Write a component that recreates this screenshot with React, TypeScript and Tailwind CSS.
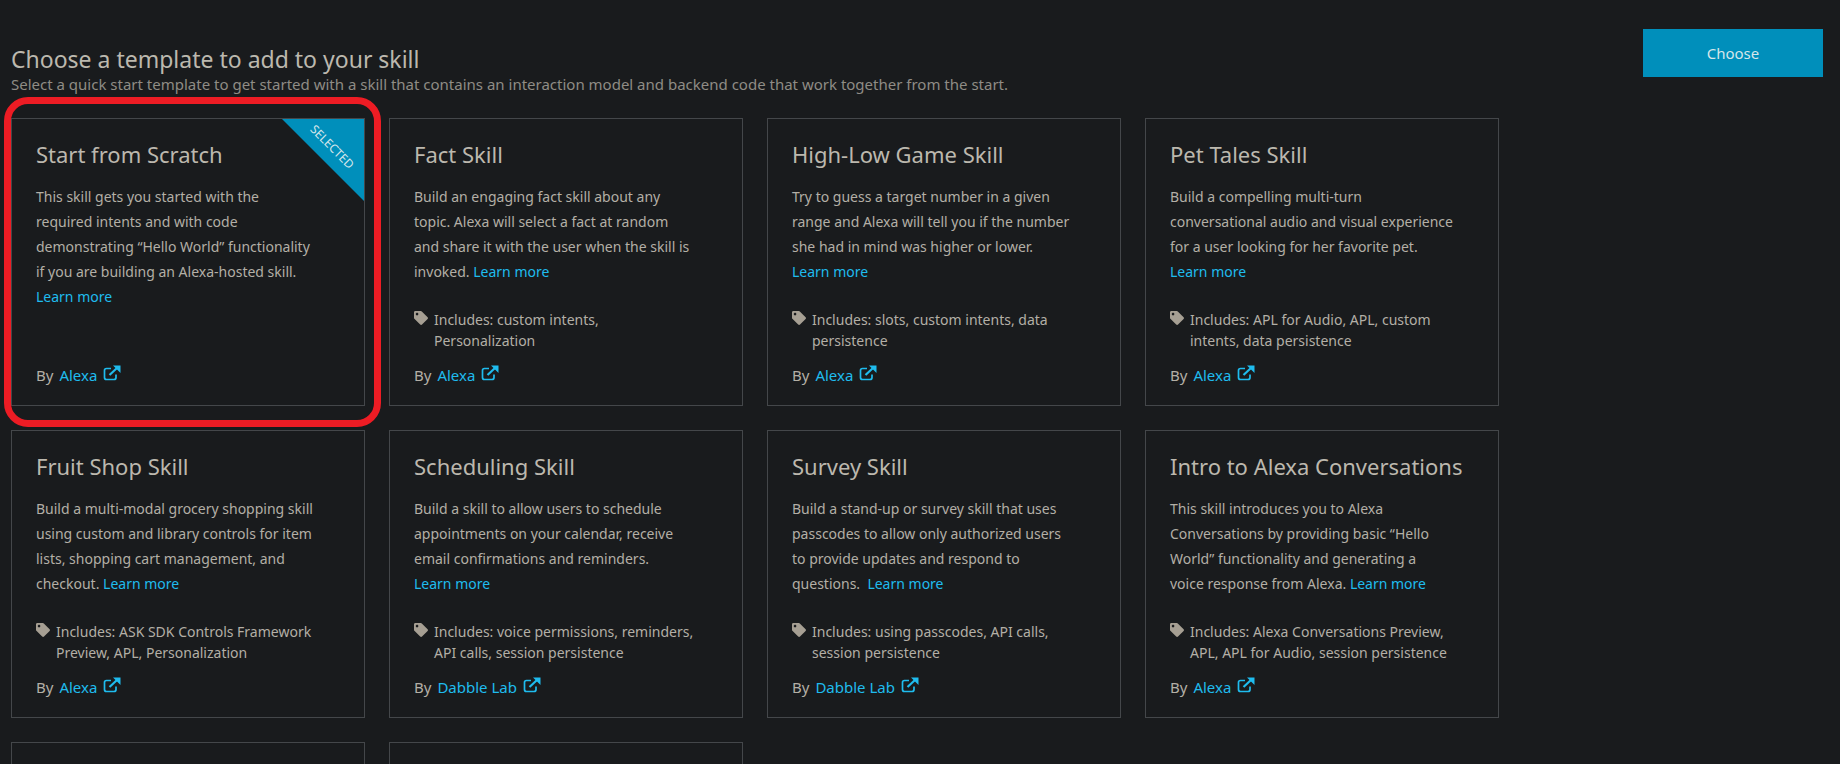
import React from "react";
import { FaTag } from "react-icons/fa";

type Card = { title: string; desc: React.ReactNode; inc?: string[]; by: string; selected?: boolean };

const More = () => <a className="text-[#1fbcee]">Learn more</a>;

const cards: Card[] = [
  { title: "Start from Scratch", selected: true, by: "Alexa", desc: <>This skill gets you started with the<br />required intents and with code<br />demonstrating “Hello World” functionality<br />if you are building an Alexa-hosted skill.<br /><More /></> },
  { title: "Fact Skill", by: "Alexa", inc: ["custom intents,", "Personalization"], desc: <>Build an engaging fact skill about any<br />topic. Alexa will select a fact at random<br />and share it with the user when the skill is<br />invoked. <More /></> },
  { title: "High-Low Game Skill", by: "Alexa", inc: ["slots, custom intents, data", "persistence"], desc: <>Try to guess a target number in a given<br />range and Alexa will tell you if the number<br />she had in mind was higher or lower.<br /><More /></> },
  { title: "Pet Tales Skill", by: "Alexa", inc: ["APL for Audio, APL, custom", "intents, data persistence"], desc: <>Build a compelling multi-turn<br />conversational audio and visual experience<br />for a user looking for her favorite pet.<br /><More /></> },
  { title: "Fruit Shop Skill", by: "Alexa", inc: ["ASK SDK Controls Framework", "Preview, APL, Personalization"], desc: <>Build a multi-modal grocery shopping skill<br />using custom and library controls for item<br />lists, shopping cart management, and<br />checkout. <More /></> },
  { title: "Scheduling Skill", by: "Dabble Lab", inc: ["voice permissions, reminders,", "API calls, session persistence"], desc: <>Build a skill to allow users to schedule<br />appointments on your calendar, receive<br />email confirmations and reminders.<br /><More /></> },
  { title: "Survey Skill", by: "Dabble Lab", inc: ["using passcodes, API calls,", "session persistence"], desc: <>Build a stand-up or survey skill that uses<br />passcodes to allow only authorized users<br />to provide updates and respond to<br />questions.&nbsp; <More /></> },
  { title: "Intro to Alexa Conversations", by: "Alexa", inc: ["Alexa Conversations Preview,", "APL, APL for Audio, session persistence"], desc: <>This skill introduces you to Alexa<br />Conversations by providing basic “Hello<br />World” functionality and generating a<br />voice response from Alexa. <More /></> },
];

const ExternalIcon = () => (
  <svg width="18" height="16" viewBox="0 0 18 16" fill="none" className="ml-[6px] mt-[-4px] shrink-0">
    <path d="M8 3.5H3.5A2 2 0 0 0 1.5 5.500V12.500A2 2 0 0 0 3.500 14.500H11A2 2 0 0 0 13 12.500V9.500" stroke="#1fbcee" strokeWidth="1.700" />
    <path d="M6.500 10L14 3" stroke="#1fbcee" strokeWidth="2.200" />
    <path d="M10 0.500H17.500V8Z" fill="#1fbcee" />
  </svg>
);

function TemplateCard({ c }: { c?: Card }) {
  if (!c) return <div className="h-[288px] border border-[#44474a]" />;
  return (
    <div className="relative flex h-[288px] flex-col border border-[#44474a] px-[24px] pt-[20px] pb-[18px]">
      {c.selected && (
        <>
          <div className="absolute right-0 top-0 h-[82px] w-[82px] bg-[#008fbb] [clip-path:polygon(0_0,100%_0,100%_100%)]" />
          <div className="absolute right-[-9px] top-[20px] w-[82px] rotate-45 text-center text-[12px] leading-[16px] text-[#d5e6ea]">SELECTED</div>
        </>
      )}
      <h2 className="text-[22px] leading-[30px] font-normal whitespace-nowrap text-[#bcb8ae]">{c.title}</h2>
      <p className="mt-[15px] text-[14px] leading-[25px] whitespace-nowrap text-[#b3afa6]">{c.desc}</p>
      <div className="mt-auto">
        {c.inc && (
          <div className="mb-[12px] flex text-[14px] leading-[21px] whitespace-nowrap text-[#b3afa6]">
            <FaTag className="mr-[6px] mt-[2px] h-[14px] w-[14px] shrink-0 text-[#a69f93]" />
            <div>Includes: {c.inc[0]}<br />{c.inc[1]}</div>
          </div>
        )}
        <div className="flex items-center text-[15px] leading-[24px] text-[#b3afa6]">
          <span className="mr-[6px]">By</span>
          <a className="text-[#1fbcee]">{c.by}</a>
          <ExternalIcon />
        </div>
      </div>
    </div>
  );
}

export default function App() {
  return (
    <div className="relative h-[764px] overflow-hidden bg-[#191b1d] pl-[11px] font-['Noto_Sans',sans-serif]">
      <div className="flex h-[118px] items-start justify-between pr-[17px]">
        <div className="pt-[44px]">
          <h1 className="text-[23px] leading-[30px] font-normal text-[#bcb8ae]">Choose a template to add to your skill</h1>
          <p className="text-[15px] leading-[20px] text-[#8f8c85]">Select a quick start template to get started with a skill that contains an interaction model and backend code that work together from the start.</p>
        </div>
        <button className="mt-[29px] h-[48px] w-[180px] bg-[#008fbb] text-[15px] text-[#d5e6ea]">Choose</button>
      </div>
      <div className="grid w-[1488px] grid-cols-[repeat(4,354px)] gap-[24px]">
        {cards.map((c) => <TemplateCard key={c.title} c={c} />)}
        <TemplateCard />
        <TemplateCard />
      </div>
      <div className="pointer-events-none absolute left-[4px] top-[97px] h-[330px] w-[377px] rounded-[24px] border-[7px] border-[#ed1c24]" />
    </div>
  );
}
